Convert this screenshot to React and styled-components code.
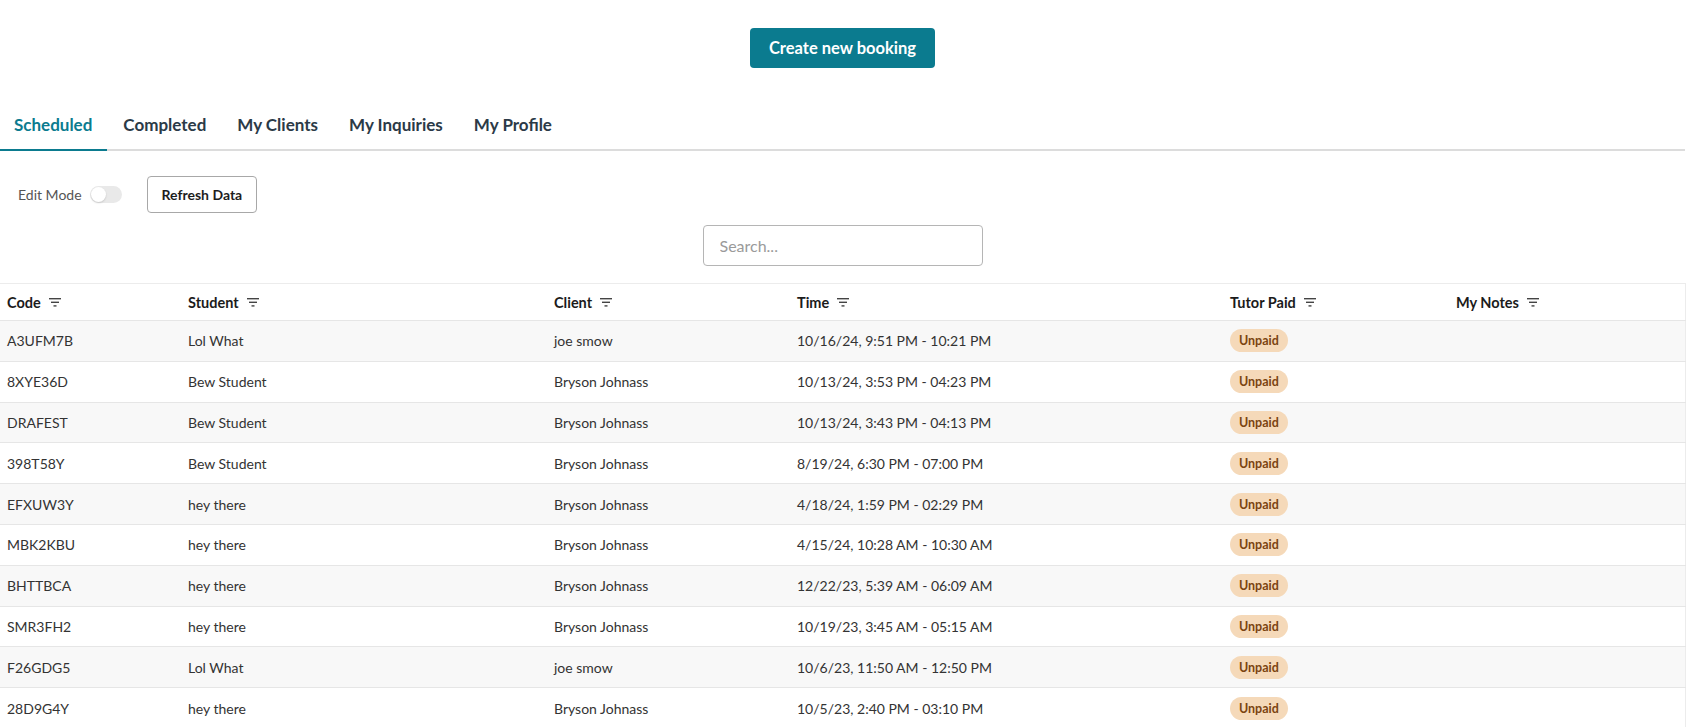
import React from 'react';
import styled, { createGlobalStyle } from 'styled-components';

const GlobalStyle = createGlobalStyle`
  body {
    margin: 0;
    background: #fff;
    font-family: Lato, "Noto Sans", sans-serif;
    color: #222;
  }
`;

const Page = styled.div`
  width: calc(100% - 16px);
  display: flex;
  flex-direction: column;
`;

const TopBar = styled.div`
  display: flex;
  justify-content: center;
  padding-top: 28px;
`;

const PrimaryButton = styled.button`
  height: 40px;
  padding: 0 19px;
  border: none;
  border-radius: 4px;
  background: #0b7b8f;
  color: #fff;
  font-family: inherit;
  font-size: 16.5px;
  font-weight: 700;
`;

const Tabs = styled.div`
  display: flex;
  gap: 2px;
  margin-top: 34px;
  border-bottom: 2px solid #dcdcdc;
`;

const Tab = styled.div`
  padding: 12px 15px 14px 14px;
  font-size: 17px;
  font-weight: 700;
  color: ${p => (p.$active ? '#0b7b8f' : '#2b3a47')};
  margin-bottom: -2px;
  border-bottom: 2px solid ${p => (p.$active ? '#0b7b8f' : 'transparent')};
`;

const Controls = styled.div`
  display: flex;
  align-items: center;
  padding: 25px 0 0 18px;
`;

const ToggleLabel = styled.span`
  font-size: 14px;
  color: #555;
`;

const Toggle = styled.span`
  position: relative;
  margin-left: 8px;
  width: 32px;
  height: 17px;
  border-radius: 9px;
  background: #e9e9e9;

  &::after {
    content: '';
    position: absolute;
    left: 1px;
    top: 1px;
    width: 15px;
    height: 15px;
    border-radius: 50%;
    background: #fff;
    box-shadow: 0 1px 2px rgba(0, 0, 0, 0.15);
  }
`;

const OutlineButton = styled.button`
  margin-left: 25px;
  height: 37px;
  padding: 0 14px;
  border: 1px solid #a8a8a8;
  border-radius: 4px;
  background: #fff;
  font-family: inherit;
  font-size: 14px;
  font-weight: 700;
  color: #1d1d1d;
`;

const SearchRow = styled.div`
  display: flex;
  justify-content: center;
  padding-top: 12px;
`;

const SearchInput = styled.input`
  box-sizing: border-box;
  width: 280px;
  height: 41px;
  padding: 0 16px;
  border: 1px solid #b5b5b5;
  border-radius: 4px;
  font-family: inherit;
  font-size: 16px;
  color: #333;

  &::placeholder {
    color: #9a9a9a;
  }
`;

const Table = styled.table`
  margin-top: 17px;
  width: 100%;
  border-collapse: collapse;
  border-top: 1px solid #ececec;
  border-right: 1px solid #ececec;
  table-layout: fixed;
  font-size: 14px;
`;

const HeadCell = styled.th`
  box-sizing: border-box;
  width: ${p => p.$w}px;
  height: 37px;
  padding: 0 7px;
  text-align: left;
  font-size: 14.5px;
  font-weight: 700;
  color: #1b1b1b;
  border-bottom: 1px solid #e6e6e6;
`;

const HeadInner = styled.span`
  display: inline-flex;
  align-items: center;
  gap: 8px;
`;

const Row = styled.tr`
  background: ${p => (p.$striped ? '#f8f8f8' : '#fff')};
`;

const Cell = styled.td`
  box-sizing: border-box;
  height: 40.8px;
  padding: 0 7px;
  color: #333;
  border-bottom: 1px solid #e6e6e6;
  white-space: nowrap;
`;

const Badge = styled.span`
  display: inline-block;
  padding: 4px 9px;
  border-radius: 13px;
  background: #f5d9b9;
  color: #7b4411;
  font-size: 12.5px;
  font-weight: 700;
`;

const FilterIcon = () => (
  <svg width="12" height="9" viewBox="0 0 12 9" fill="#444">
    <rect x="0" y="0" width="12" height="1.4" />
    <rect x="2" y="3.6" width="8" height="1.4" />
    <rect x="4.5" y="7.2" width="3" height="1.4" />
  </svg>
);

const columns = [
  { label: 'Code', w: 181 },
  { label: 'Student', w: 366 },
  { label: 'Client', w: 243 },
  { label: 'Time', w: 433 },
  { label: 'Tutor Paid', w: 226 },
  { label: 'My Notes', w: 236 },
];

const bookings = [
  ['A3UFM7B', 'Lol What', 'joe smow', '10/16/24, 9:51 PM - 10:21 PM'],
  ['8XYE36D', 'Bew Student', 'Bryson Johnass', '10/13/24, 3:53 PM - 04:23 PM'],
  ['DRAFEST', 'Bew Student', 'Bryson Johnass', '10/13/24, 3:43 PM - 04:13 PM'],
  ['398T58Y', 'Bew Student', 'Bryson Johnass', '8/19/24, 6:30 PM - 07:00 PM'],
  ['EFXUW3Y', 'hey there', 'Bryson Johnass', '4/18/24, 1:59 PM - 02:29 PM'],
  ['MBK2KBU', 'hey there', 'Bryson Johnass', '4/15/24, 10:28 AM - 10:30 AM'],
  ['BHTTBCA', 'hey there', 'Bryson Johnass', '12/22/23, 5:39 AM - 06:09 AM'],
  ['SMR3FH2', 'hey there', 'Bryson Johnass', '10/19/23, 3:45 AM - 05:15 AM'],
  ['F26GDG5', 'Lol What', 'joe smow', '10/6/23, 11:50 AM - 12:50 PM'],
  ['28D9G4Y', 'hey there', 'Bryson Johnass', '10/5/23, 2:40 PM - 03:10 PM'],
];

const tabs = ['Scheduled', 'Completed', 'My Clients', 'My Inquiries', 'My Profile'];

function App() {
  return (
    <Page>
      <GlobalStyle />
      <TopBar>
        <PrimaryButton>Create new booking</PrimaryButton>
      </TopBar>
      <Tabs>
        {tabs.map((t, i) => (
          <Tab key={t} $active={i === 0}>{t}</Tab>
        ))}
      </Tabs>
      <Controls>
        <ToggleLabel>Edit Mode</ToggleLabel>
        <Toggle />
        <OutlineButton>Refresh Data</OutlineButton>
      </Controls>
      <SearchRow>
        <SearchInput placeholder="Search..." />
      </SearchRow>
      <Table>
        <thead>
          <tr>
            {columns.map(c => (
              <HeadCell key={c.label} $w={c.w}>
                <HeadInner>
                  {c.label}
                  <FilterIcon />
                </HeadInner>
              </HeadCell>
            ))}
          </tr>
        </thead>
        <tbody>
          {bookings.map((b, i) => (
            <Row key={b[0]} $striped={i % 2 === 0}>
              <Cell>{b[0]}</Cell>
              <Cell>{b[1]}</Cell>
              <Cell>{b[2]}</Cell>
              <Cell>{b[3]}</Cell>
              <Cell><Badge>Unpaid</Badge></Cell>
              <Cell />
            </Row>
          ))}
        </tbody>
      </Table>
    </Page>
  );
}

export default App;
